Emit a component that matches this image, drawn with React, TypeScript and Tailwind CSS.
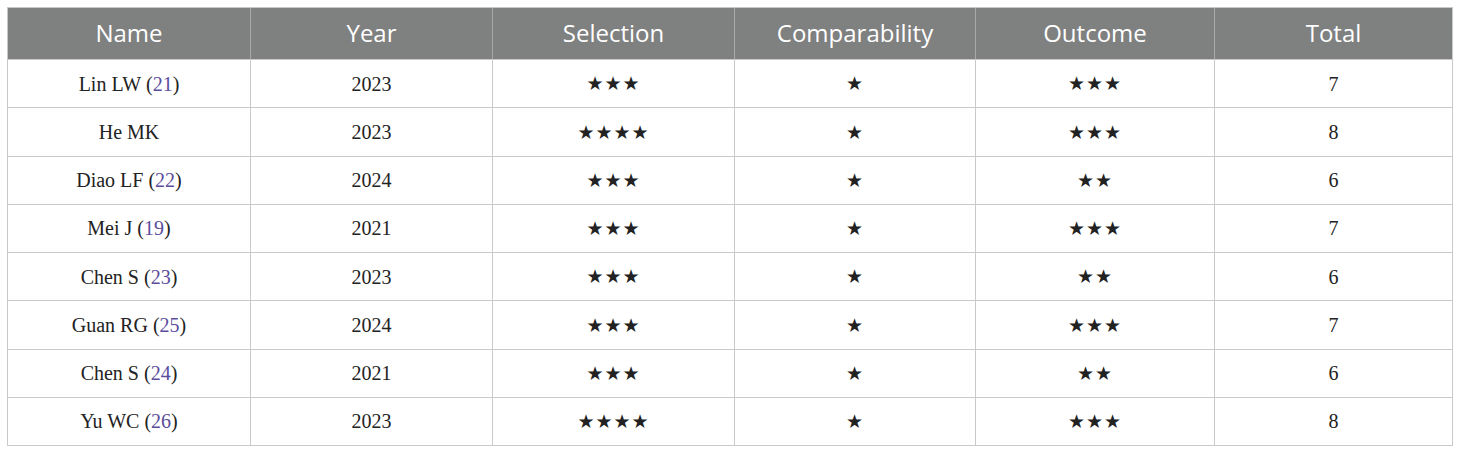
const rows = [
  { name: 'Lin LW', ref: '21', year: '2023', sel: 3, comp: 1, out: 3, total: 7 },
  { name: 'He MK', ref: '', year: '2023', sel: 4, comp: 1, out: 3, total: 8 },
  { name: 'Diao LF', ref: '22', year: '2024', sel: 3, comp: 1, out: 2, total: 6 },
  { name: 'Mei J', ref: '19', year: '2021', sel: 3, comp: 1, out: 3, total: 7 },
  { name: 'Chen S', ref: '23', year: '2023', sel: 3, comp: 1, out: 2, total: 6 },
  { name: 'Guan RG', ref: '25', year: '2024', sel: 3, comp: 1, out: 3, total: 7 },
  { name: 'Chen S', ref: '24', year: '2021', sel: 3, comp: 1, out: 2, total: 6 },
  { name: 'Yu WC', ref: '26', year: '2023', sel: 4, comp: 1, out: 3, total: 8 },
]

const headers = ['Name', 'Year', 'Selection', 'Comparability', 'Outcome', 'Total']
const cols = 'grid-cols-[242px_242px_242px_241px_239px_238px]'

function Stars({ n }: { n: number }) {
  return <span className="font-['DejaVu_Sans',sans-serif] text-[19px] tracking-[1px] text-[#222]">{'★'.repeat(n)}</span>
}

export default function App() {
  return (
    <div className="bg-white w-[1460px] h-[453px] pt-[7px] pl-[7px]">
      <div className="w-[1446px] border border-[#c9c9c9]">
        {/* header */}
        <div className={`grid ${cols} h-[51px] bg-[#7f8080]`}>
          {headers.map((h, i) => (
            <div
              key={h}
              className={`flex items-center justify-center pb-[2px] text-white text-[24px] font-['Open_Sans','Lato',sans-serif] ${i > 0 ? 'border-l border-[#a9a9a9]' : ''}`}
            >
              {h}
            </div>
          ))}
        </div>
        {rows.map((r, idx) => (
          <div key={idx} className={`grid ${cols} h-[48.25px] border-t border-[#c9c9c9] text-[20px] text-[#222] font-['Liberation_Serif',serif]`}>
            <div className="flex items-center justify-center">
              {r.name}
              {r.ref && (
                <span className="ml-[5px]">
                  (<span className="text-[#5a4d9c]">{r.ref}</span>)
                </span>
              )}
            </div>
            <div className="flex items-center justify-center border-l border-[#c9c9c9]">{r.year}</div>
            <div className="flex items-center justify-center border-l border-[#c9c9c9]"><Stars n={r.sel} /></div>
            <div className="flex items-center justify-center border-l border-[#c9c9c9]"><Stars n={r.comp} /></div>
            <div className="flex items-center justify-center border-l border-[#c9c9c9]"><Stars n={r.out} /></div>
            <div className="flex items-center justify-center border-l border-[#c9c9c9]">{r.total}</div>
          </div>
        ))}
      </div>
    </div>
  )
}
